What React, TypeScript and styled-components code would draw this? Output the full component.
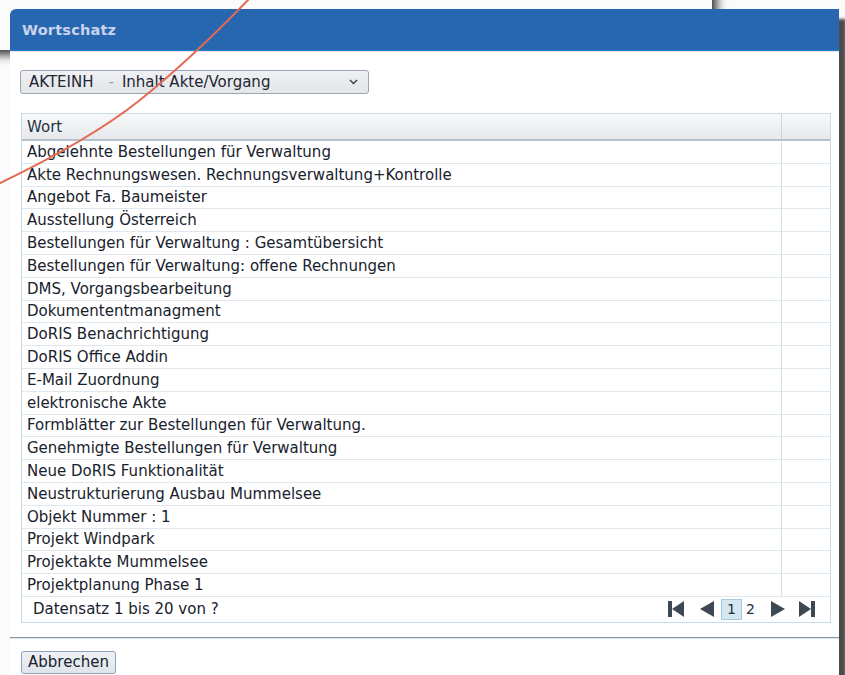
import React from "react";
import styled, { createGlobalStyle } from "styled-components";

const GlobalStyle = createGlobalStyle`
  html, body {
    margin: 0;
    padding: 0;
    background: #fbfbfb;
  }
  body {
    font-family: "DejaVu Sans", Verdana, sans-serif;
    font-size: 15px;
    color: #18222d;
  }
`;

const Desktop = styled.div`
  position: relative;
  width: 845px;
  height: 675px;
  overflow: hidden;
  padding: 9px 0 0 10px;
  box-sizing: border-box;
`;

/* a window lying underneath the dialog; only its shadow shows */
const BackWindow = styled.div`
  position: absolute;
  left: -30px;
  top: -30px;
  width: 742px;
  height: 80px;
  background: #fbfbfb;
  box-shadow: 4px 4px 10px rgba(20, 20, 20, 0.95);
  z-index: 0;
`;

const Dialog = styled.section`
  position: relative;
  z-index: 1;
  width: 829px;
  background: #ffffff;
  border-top-left-radius: 6px;
  box-shadow: 7px 10px 3px rgba(60, 60, 60, 0.92);
  display: flex;
  flex-direction: column;
`;

const TitleBar = styled.header`
  height: 41px;
  background: #2767b0;
  border-top-left-radius: 6px;
  border-bottom: 1px solid #1a86cf;
  display: flex;
  align-items: center;
  padding-left: 12px;
  color: #c9d3ec;
  font-weight: bold;
  font-size: 14.5px;
  letter-spacing: 0.2px;
`;

const Body = styled.div`
  border-top: 1px solid #f3d9e4;
  padding: 18px 10px 12px 10px;
  display: flex;
  flex-direction: column;
`;

const Select = styled.div`
  width: 349px;
  height: 24px;
  box-sizing: border-box;
  border: 1px solid #9aa5b1;
  border-radius: 3px;
  background: linear-gradient(#eef0f3, #e3e6ea);
  display: flex;
  align-items: center;
  padding: 0 10px 0 8px;
  color: #1e2630;
`;

const Code = styled.span`
  margin-right: 15px;
`;

const Dash = styled.span`
  color: #9aa2ab;
  margin-right: 8px;
`;

const SelectLabel = styled.span`
  flex: 1;
`;

const Table = styled.div`
  margin: 19px 0 0 1px;
  width: 808px;
  border: 1px solid #cbdbe6;
  display: flex;
  flex-direction: column;
`;

const HeadRow = styled.div`
  display: grid;
  grid-template-columns: 1fr 49px;
  height: 25px;
  background: linear-gradient(#f7f8f9, #e6e9ec);
  border-bottom: 2px solid #b6c3cc;
`;

const HeadCell = styled.div<{ $last?: boolean }>`
  display: flex;
  align-items: center;
  padding-left: 5px;
  color: #243140;
  border-left: ${(p) => (p.$last ? "1px solid #cad7e0" : "none")};
`;

const Row = styled.div`
  display: grid;
  grid-template-columns: 1fr 49px;
  height: 22.8px;
  box-sizing: border-box;
  border-bottom: 1px solid #dfe8ef;
`;

const Cell = styled.div<{ $last?: boolean }>`
  display: flex;
  align-items: center;
  padding-left: 5px;
  white-space: nowrap;
  color: #18222d;
  border-left: ${(p) => (p.$last ? "1px solid #d3dfe8" : "none")};
`;

const Footer = styled.div`
  height: 25px;
  display: flex;
  align-items: center;
  padding: 0 14px 0 11px;
`;

const Status = styled.span`
  flex: 1;
  color: #18222d;
`;

const Pager = styled.div`
  display: flex;
  align-items: center;
`;

const PagerIcon = styled.svg<{ $gap: number }>`
  width: 18px;
  height: 18px;
  margin-left: ${(p) => p.$gap}px;
  fill: #3e4852;
  display: block;
`;

const PageNumber = styled.span<{ $active?: boolean }>`
  display: inline-flex;
  align-items: center;
  justify-content: center;
  width: ${(p) => (p.$active ? 21 : 17)}px;
  height: 21px;
  margin-left: ${(p) => (p.$active ? 5 : 0)}px;
  box-sizing: border-box;
  font-size: 14px;
  color: #26303a;
  background: ${(p) => (p.$active ? "#d6e7f4" : "transparent")};
  border: 1px solid ${(p) => (p.$active ? "#a7c9e2" : "transparent")};
`;

const Divider = styled.div`
  margin: 14px -10px 0 -10px;
  border-top: 1px solid #8398aa;
  border-bottom: 1px solid #dde3e8;
`;

const Button = styled.button`
  margin: 12px 0 0 1px;
  align-self: flex-start;
  width: 95px;
  height: 23px;
  font-family: "DejaVu Sans", Verdana, sans-serif;
  font-size: 15px;
  color: #18222d;
  background: linear-gradient(#eef2f6, #dfe5eb);
  border: 1px solid #8ea3b6;
  border-radius: 3px;
  padding: 0;
`;

const Annotation = styled.svg`
  position: absolute;
  left: 0;
  top: 0;
  width: 260px;
  height: 190px;
  z-index: 3;
  pointer-events: none;
`;

const words = [
  "Abgelehnte Bestellungen für Verwaltung",
  "Akte Rechnungswesen. Rechnungsverwaltung+Kontrolle",
  "Angebot Fa. Baumeister",
  "Ausstellung Österreich",
  "Bestellungen für Verwaltung : Gesamtübersicht",
  "Bestellungen für Verwaltung: offene Rechnungen",
  "DMS, Vorgangsbearbeitung",
  "Dokumententmanagment",
  "DoRIS Benachrichtigung",
  "DoRIS Office Addin",
  "E-Mail Zuordnung",
  "elektronische Akte",
  "Formblätter zur Bestellungen für Verwaltung.",
  "Genehmigte Bestellungen für Verwaltung",
  "Neue DoRIS Funktionalität",
  "Neustrukturierung Ausbau Mummelsee",
  "Objekt Nummer : 1",
  "Projekt Windpark",
  "Projektakte Mummelsee",
  "Projektplanung Phase 1",
];

const Chevron = () => (
  <svg width="9" height="6" viewBox="0 0 9 6">
    <path d="M1 1 L4.5 4.5 L8 1" fill="none" stroke="#3a434c" strokeWidth="1.5" />
  </svg>
);

export default function App() {
  return (
    <>
      <GlobalStyle />
      <Desktop>
        <BackWindow />
        <Dialog>
          <TitleBar>Wortschatz</TitleBar>
          <Body>
            <Select>
              <Code>AKTEINH</Code>
              <Dash>-</Dash>
              <SelectLabel>Inhalt Akte/Vorgang</SelectLabel>
              <Chevron />
            </Select>

            <Table>
              <HeadRow>
                <HeadCell>Wort</HeadCell>
                <HeadCell $last />
              </HeadRow>
              {words.map((w) => (
                <Row key={w}>
                  <Cell>{w}</Cell>
                  <Cell $last />
                </Row>
              ))}
              <Footer>
                <Status>Datensatz 1 bis 20 von ?</Status>
                <Pager>
                  <PagerIcon $gap={0} viewBox="0 0 18 18">
                    <rect x="1" y="1" width="4" height="16" />
                    <path d="M17 1 L5 9 L17 17 Z" />
                  </PagerIcon>
                  <PagerIcon $gap={13} viewBox="0 0 18 18">
                    <path d="M16 1 L2 9 L16 17 Z" />
                  </PagerIcon>
                  <PageNumber $active>1</PageNumber>
                  <PageNumber>2</PageNumber>
                  <PagerIcon $gap={10} viewBox="0 0 18 18">
                    <path d="M2 1 L16 9 L2 17 Z" />
                  </PagerIcon>
                  <PagerIcon $gap={11} viewBox="0 0 18 18">
                    <path d="M1 1 L13 9 L1 17 Z" />
                    <rect x="13" y="1" width="4" height="16" />
                  </PagerIcon>
                </Pager>
              </Footer>
            </Table>

            <Divider />
            <Button>Abbrechen</Button>
          </Body>
        </Dialog>
        <Annotation viewBox="0 0 260 190">
          <path
            d="M251 -3 Q190 60 140 100 T -2 184"
            fill="none"
            stroke="#e56a52"
            strokeWidth="2"
            strokeLinecap="round"
          />
        </Annotation>
      </Desktop>
    </>
  );
}
